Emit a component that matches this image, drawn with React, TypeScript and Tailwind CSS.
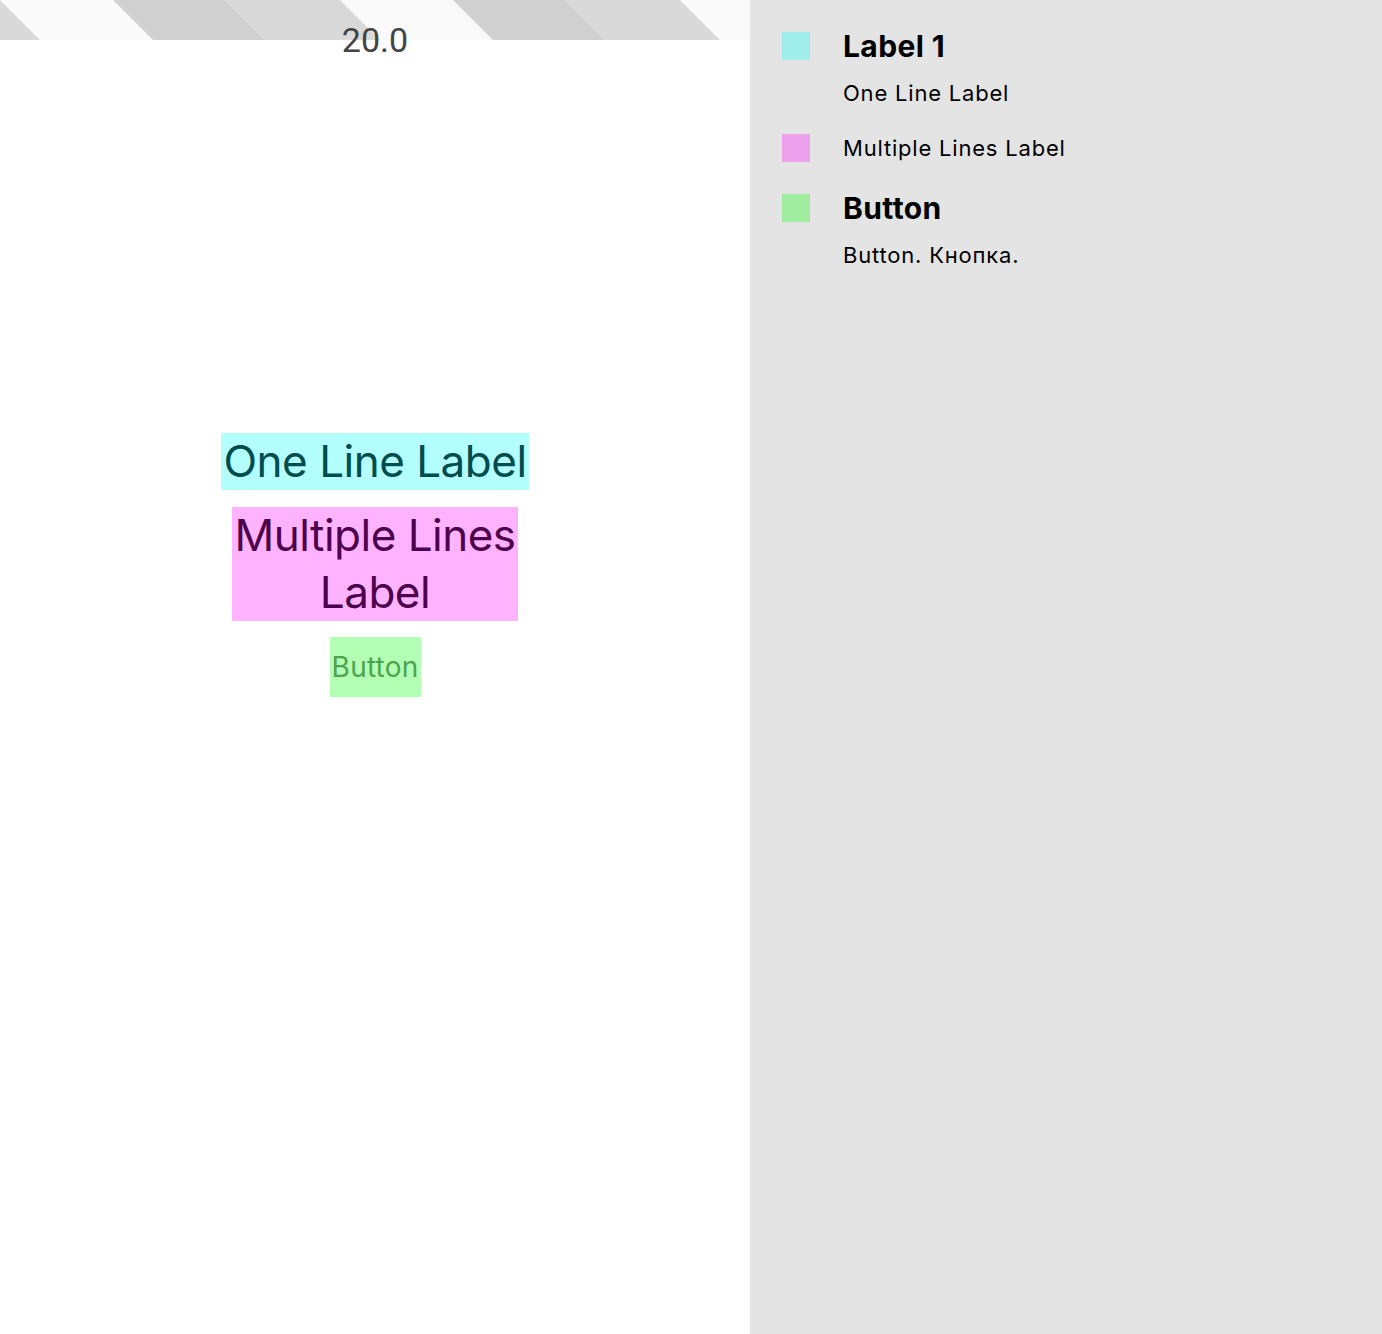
import React from 'react';

const stripes = [-1, 0, 1, 2];

const StripeBand: React.FC = () => (
  <svg width="750" height="40" viewBox="0 0 750 40" className="block">
    <rect width="750" height="40" fill="#fafafa" />
    {stripes.map((k) => {
      const o = k * 340;
      return (
        <g key={k}>
          <polygon points={`${113 + o},0 ${225 + o},0 ${265 + o},40 ${153 + o},40`} fill="#d0d0d0" />
          <polygon points={`${225 + o},0 ${340 + o},0 ${380 + o},40 ${265 + o},40`} fill="#d9d9d9" />
        </g>
      );
    })}
  </svg>
);

const App: React.FC = () => {
  return (
    <div className="flex w-[1382px] h-[1334px] font-['Inter',sans-serif]">
      {/* Preview */}
      <div className="relative w-[750px] h-full bg-white flex flex-col">
        <StripeBand />
        <div className="absolute top-[20px] left-0 w-full text-center font-['Roboto',sans-serif] text-[34px] leading-[40px] text-[#444444]">
          20.0
        </div>

        <div className="flex flex-col items-center pt-[393px] tracking-[-0.5px]">
          <div className="bg-[#b3ffff] text-[#004d4d] text-[44px] leading-[57px] w-[308px] whitespace-nowrap flex justify-center">
            One Line Label
          </div>
          <div className="mt-[17px] bg-[#ffb3ff] text-[#4d004d] text-[44px] leading-[57px] w-[286px] whitespace-nowrap flex flex-col items-center">
            <span>Multiple Lines</span>
            <span>Label</span>
          </div>
          <div className="mt-4 bg-[#b3ffb3] text-[#4ea34e] text-[28px] tracking-[0.2px] h-[60px] w-[91px] flex items-center justify-center">
            Button
          </div>
        </div>
      </div>

      {/* Legend */}
      <div className="flex-1 h-full bg-[#e4e4e4] pl-8 pt-8 text-black">
        <div className="flex gap-[33px]">
          <div className="w-7 h-7 bg-[#a0eeec] shrink-0" />
          <div className="flex flex-col">
            <span className="text-[30px] leading-[28px] font-bold tracking-[0.4px]">Label 1</span>
            <span className="mt-[19px] text-[22px] leading-[28px] tracking-[0.8px]">One Line Label</span>
          </div>
        </div>
        <div className="flex gap-[33px] mt-[27px]">
          <div className="w-7 h-7 bg-[#eda0ec] shrink-0" />
          <span className="text-[22px] leading-[28px] tracking-[0.8px]">Multiple Lines Label</span>
        </div>
        <div className="flex gap-[33px] mt-8">
          <div className="w-7 h-7 bg-[#a0eda0] shrink-0" />
          <div className="flex flex-col">
            <span className="text-[30px] leading-[28px] font-bold tracking-[0.4px]">Button</span>
            <span className="mt-[19px] text-[22px] leading-[28px] tracking-[0.8px]">Button. Кнопка.</span>
          </div>
        </div>
      </div>
    </div>
  );
};

export default App;
